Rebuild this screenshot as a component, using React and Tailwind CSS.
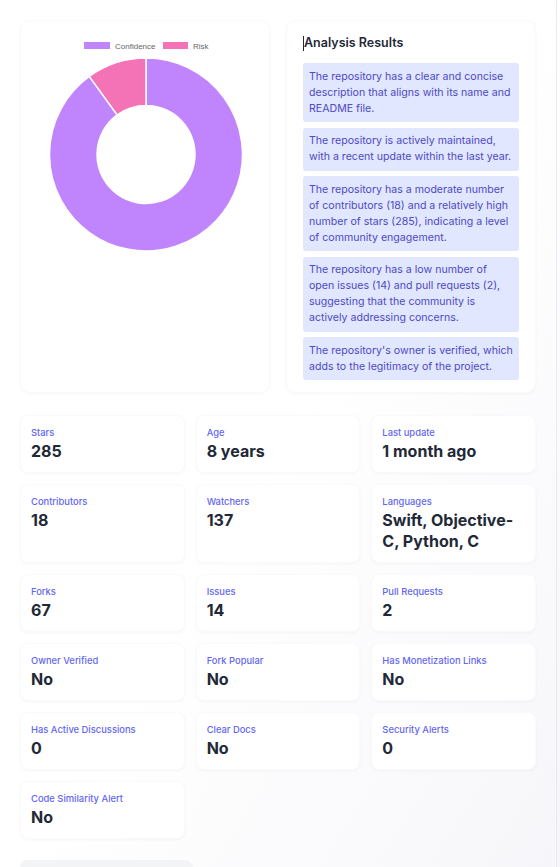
import React from "react";

const results = [
  "The repository has a clear and concise description that aligns with its name and README file.",
  "The repository is actively maintained, with a recent update within the last year.",
  "The repository has a moderate number of contributors (18) and a relatively high number of stars (285), indicating a level of community engagement.",
  "The repository has a low number of open issues (14) and pull requests (2), suggesting that the community is actively addressing concerns.",
  "The repository's owner is verified, which adds to the legitimacy of the project.",
];

const stats = [
  ["Stars", "285"],
  ["Age", "8 years"],
  ["Last update", "1 month ago"],
  ["Contributors", "18"],
  ["Watchers", "137"],
  ["Languages", "Swift, Objective-C, Python, C"],
  ["Forks", "67"],
  ["Issues", "14"],
  ["Pull Requests", "2"],
  ["Owner Verified", "No"],
  ["Fork Popular", "No"],
  ["Has Monetization Links", "No"],
  ["Has Active Discussions", "0"],
  ["Clear Docs", "No"],
  ["Security Alerts", "0"],
  ["Code Similarity Alert", "No"],
];

function Donut() {
  return (
    <svg width="250" height="250" viewBox="0 0 250 250" className="block">
      <rect x="63" y="21" width="26" height="7" fill="#c084fc" />
      <text x="94" y="27.5" fontSize="8" fill="#666" fontFamily="Liberation Sans, Arial, sans-serif">Confidence</text>
      <rect x="142" y="21" width="25" height="7" fill="#f472b6" />
      <text x="172" y="27.5" fontSize="8" fill="#666" fontFamily="Liberation Sans, Arial, sans-serif">Risk</text>
      <path
        d="M125 37 A96.5 96.5 0 1 1 68.28 55.43 L96.2 93.86 A49 49 0 1 0 125 84.5 Z"
        fill="#c084fc"
        stroke="#fff"
        strokeWidth="1.5"
      />
      <path
        d="M68.28 55.43 A96.5 96.5 0 0 1 125 37 L125 84.5 A49 49 0 0 0 96.2 93.86 Z"
        fill="#f472b6"
        stroke="#fff"
        strokeWidth="1.5"
      />
    </svg>
  );
}

export default function App() {
  return (
    <div
      className="w-[560px] min-h-[867px] bg-gradient-to-br from-white via-white to-[#f6f6fa]"
      style={{ fontFamily: "Inter, 'Noto Sans', sans-serif" }}
    >
      <div className="w-[557px] min-h-[867px] border-r border-[#ebe8f6] px-5 pt-5">
        <div className="grid grid-cols-2 gap-4">
          <div className="h-[373px] rounded-[10px] bg-white shadow-[0_1px_3px_rgba(0,0,0,0.035)] border border-[#f9fafb]">
            <Donut />
          </div>
          <div className="h-[373px] rounded-[10px] bg-white shadow-[0_1px_3px_rgba(0,0,0,0.035)] border border-[#f9fafb] px-4 pt-[12px]">
            <h2 className="flex items-center text-[12.5px] leading-[20px] font-semibold text-[#1f2937] mb-[10px]">
              <span className="inline-block w-px h-[15px] bg-[#1f2937]" />
              Analysis Results
            </h2>
            <div className="flex flex-col gap-[5.5px]">
              {results.map((r, i) => (
                <div
                  key={i}
                  className="rounded-[3px] bg-[#e0e7ff] px-[6px] py-[5.5px] text-[10.6px] leading-[16px] text-[#4f49c4]"
                >
                  {r}
                </div>
              ))}
            </div>
          </div>
        </div>

        <div className="mt-[22px] grid grid-cols-3 gap-x-[11px] gap-y-[11px]">
          {stats.map(([label, value]) => (
            <div
              key={label}
              className="rounded-[8px] bg-white shadow-[0_1px_3px_rgba(0,0,0,0.035)] border border-[#f9fafb] px-[10px] pt-[10px] pb-[10px]"
            >
              <div className="text-[9.4px] leading-[14px] font-medium text-[#6366f1]">{label}</div>
              <div className="text-[16px] leading-[21px] font-bold text-[#1f2937] mt-[1px]">{value}</div>
            </div>
          ))}
        </div>

        <div className="mt-[21px] w-[173px] h-[30px] rounded-t-[8px] bg-[#f3f4f6]" />
      </div>
    </div>
  );
}
